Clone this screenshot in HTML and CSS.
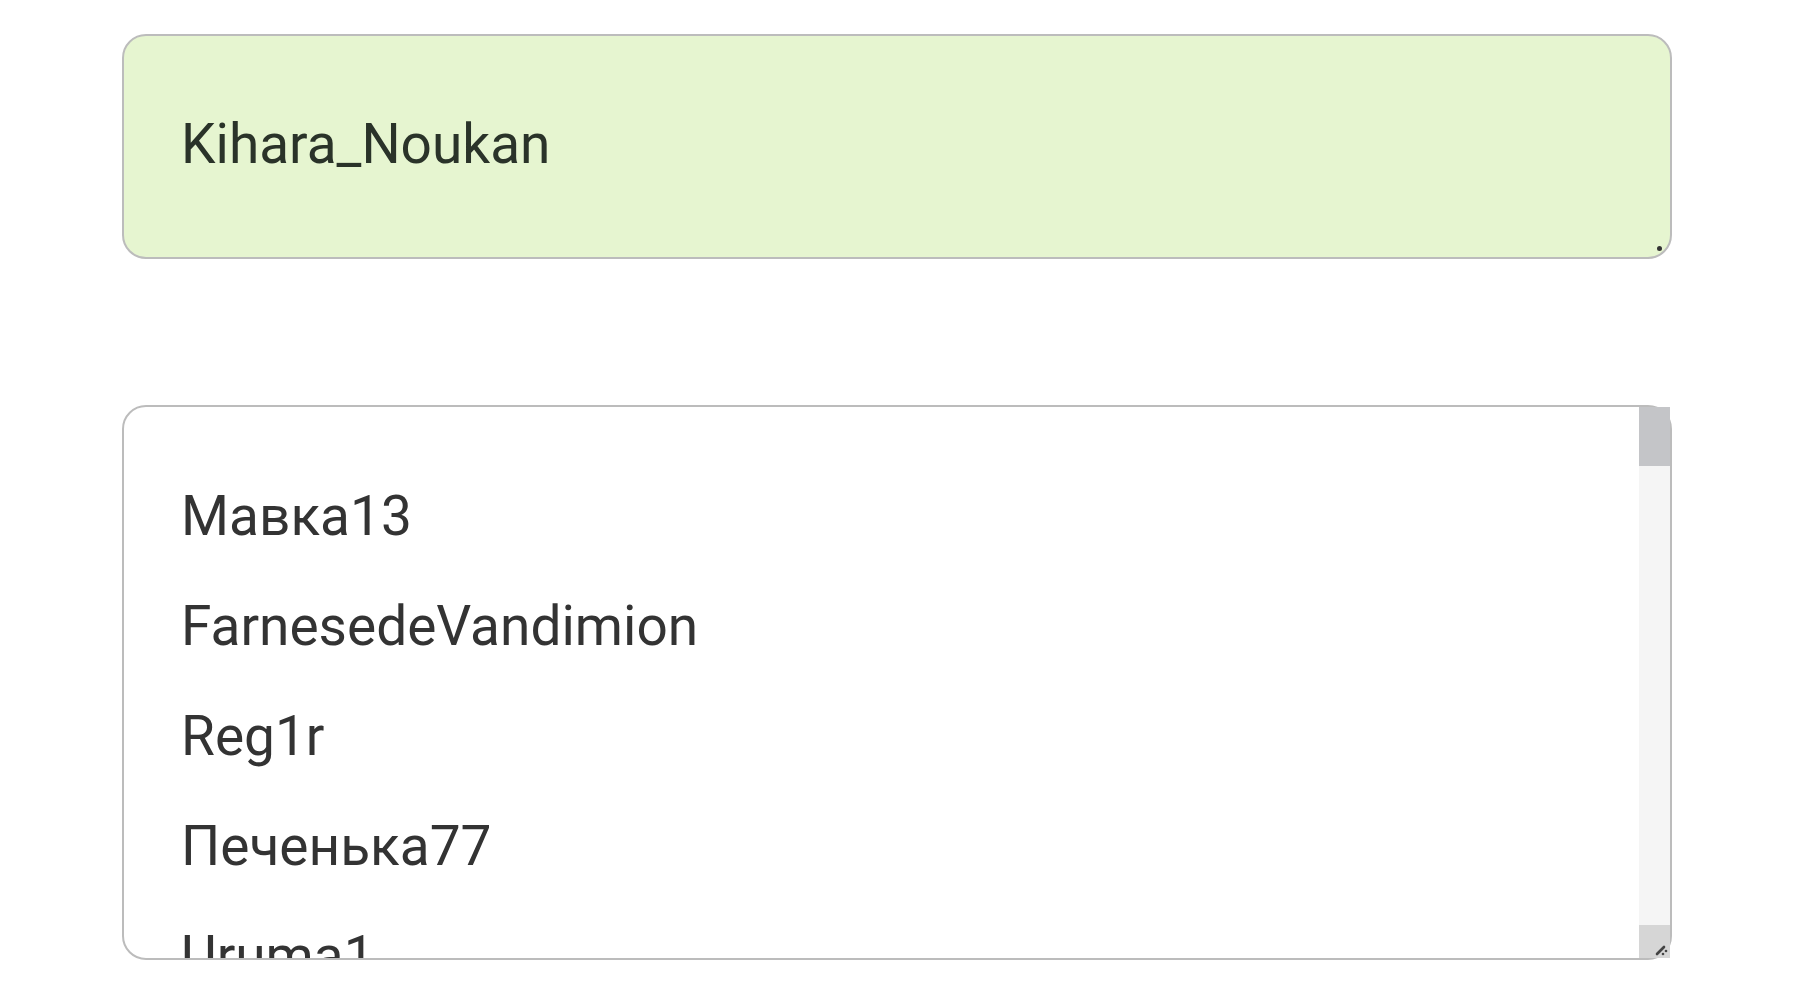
FILE: index.html
```html
<html>
<head>
<link rel="stylesheet" href="styles.css">
</head>
<body>

<div class="name-box">
  <span class="name-text">Kihara_Noukan</span>
  <span class="grip"></span>
</div>

<div class="list-box">
  <div class="list-items">
    <div class="item">Мавка13</div>
    <div class="item">FarnesedeVandimion</div>
    <div class="item">Reg1r</div>
    <div class="item">Печенька77</div>
    <div class="item">Uruma1</div>
    <div class="item">Kihara_Noukan</div>
  </div>
  <div class="scrollbar">
    <div class="thumb"></div>
    <div class="track"></div>
    <div class="resizer">
      <svg width="14" height="14" viewBox="0 0 14 14">
        <path d="M2 11 L9 4" stroke="#444" stroke-width="2.6" stroke-linecap="round" fill="none"/>
        <circle cx="8" cy="11" r="1.3" fill="#444"/>
        <circle cx="11" cy="8" r="1.3" fill="#444"/>
      </svg>
    </div>
  </div>
</div>

</body>
</html>
```

FILE: styles.css
```css
body {
	margin: 0;
	padding: 34px 0 0 122px;
	background-color: #ffffff;
	font-family: Roboto, "Noto Sans", sans-serif;
	}

.name-box {
	position: relative;
	width: 1489px;
	height: 221px;
	border: 2px solid #bcbcbc;
	border-radius: 24px;
	background-color: #e6f5d0;
	display: flex;
	align-items: center;
	padding-left: 57px;
}

.name-text {
	font-size: 55px;
	color: #2a3329;
	margin-top: -6px;
}

.grip {
	position: absolute;
	right: 8px;
	bottom: 6px;
	width: 5px;
	height: 5px;
	border-radius: 50%;
	background-color: #333;
}

.list-box {
	margin-top: 146px;
	width: 1546px;
	height: 551px;
	border: 2px solid #bcbcbc;
	border-radius: 24px;
	display: flex;
}

.list-items {
	flex: 1;
	overflow: hidden;
	padding: 54px 0 0 57px;
}

.item {
	font-size: 55px;
	line-height: 110px;
	color: #333333;
}

.scrollbar {
	width: 31px;
	display: flex;
	flex-direction: column;
	background-color: #f5f5f5;
}

.thumb {
	height: 59px;
	background-color: #c4c5c8;
}

.track {
	flex: 1;
}

.resizer {
	height: 32px;
	background-color: #d6d6d6;
	display: flex;
	align-items: flex-end;
	justify-content: flex-end;
	padding: 0 1px 1px 0;
}
```
